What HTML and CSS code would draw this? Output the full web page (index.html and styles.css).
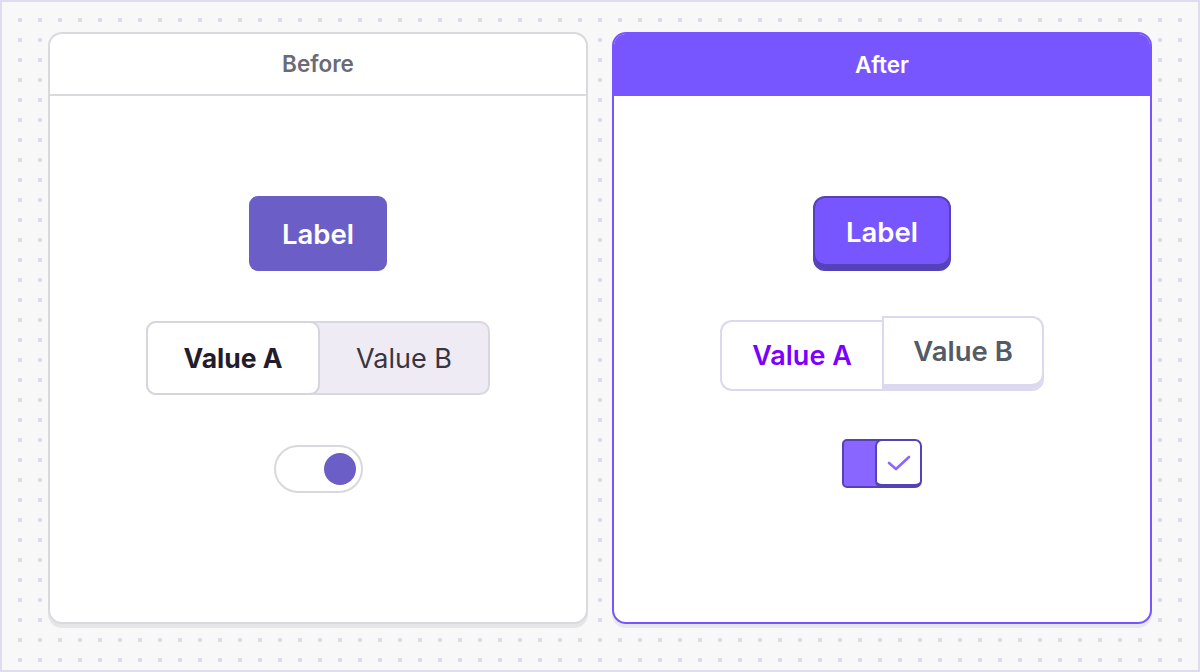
FILE: index.html
```html
<!DOCTYPE html>
<html>
<head>
<meta charset="utf-8">
<link rel="stylesheet" href="styles.css">
</head>
<body>
<div class="frame">
  <section class="card card-before">
    <header class="card-head">Before</header>
    <div class="card-body">
      <div class="btn-before">Label</div>
      <div class="seg-before">
        <div class="seg-before-a">Value A</div>
        <div class="seg-before-b">Value B</div>
      </div>
      <div class="toggle-before"><span class="knob-before"></span></div>
    </div>
  </section>
  <section class="card card-after">
    <header class="card-head head-after">After</header>
    <div class="card-body">
      <div class="btn-after">Label</div>
      <div class="seg-after">
        <div class="seg-after-a">Value A</div>
        <div class="seg-after-b">Value B</div>
      </div>
      <div class="toggle-after">
        <span class="track-after"></span>
        <span class="knob-after">
          <svg width="26" height="18" viewBox="0 0 26 18"><path d="M3 9 L10 15 L23 3" fill="none" stroke="#8a66ff" stroke-width="2.6" stroke-linecap="round" stroke-linejoin="round"/></svg>
        </span>
      </div>
    </div>
  </section>
</div>
</body>
</html>
```
FILE: styles.css
```css
* { box-sizing: border-box; }
html, body { margin: 0; padding: 0; }
body { font-family: Inter, "Noto Sans", sans-serif; }
.frame {
  width: 1200px;
  height: 672px;
  border: 2px solid #dedcf0;
  background-color: #f8f8f8;
  background-image: radial-gradient(circle, #dcdae6 2px, transparent 2.5px);
  background-size: 20px 20px;
  background-position: 8px 8px;
  padding: 30px 46px 0 46px;
  display: flex;
  gap: 24px;
}
.card {
  width: 540px;
  height: 592px;
  background: #fff;
  border-radius: 14px;
  display: flex;
  flex-direction: column;
  overflow: hidden;
}
.card-before {
  border: 2px solid #d9d9de;
  box-shadow: 0 4px 0 #e6e6e9;
}
.card-after {
  border: 2px solid #7755ff;
  box-shadow: 0 4px 0 #e8e8ea;
}
.card-head {
  height: 62px;
  display: flex;
  align-items: center;
  justify-content: center;
  font-size: 22.5px;
  font-weight: 600;
  color: #6b6a77;
  border-bottom: 2px solid #d9d9de;
  flex: none;
  padding-bottom: 2px;
}
.head-after {
  background: #7755ff;
  color: #fff;
  border-bottom: none;
  height: 62px;
}
.card-body {
  flex: 1;
  display: flex;
  flex-direction: column;
  align-items: center;
  padding-top: 100px;
}

.btn-before {
  width: 138px;
  height: 75px;
  border-radius: 9px;
  background: #6b5fc7;
  color: #fff;
  font-size: 27.5px;
  font-weight: 600;
  display: flex;
  align-items: center;
  justify-content: center;
}
.seg-before {
  margin-top: 50px;
  width: 344px;
  height: 74px;
  border: 2px solid #d9d7e0;
  border-radius: 10px;
  background: #efebf5;
  display: flex;
}
.seg-before-a {
  width: 174px;
  margin: -2px 0 -2px -2px;
  background: #fff;
  border: 2px solid #d6d4dc;
  border-radius: 10px;
  display: flex;
  align-items: center;
  justify-content: center;
  font-size: 26.5px;
  font-weight: 700;
  color: #231c2c;
}
.seg-before-b {
  flex: 1;
  display: flex;
  align-items: center;
  justify-content: center;
  font-size: 27px;
  font-weight: 400;
  color: #3a3340;
}
.toggle-before {
  margin-top: 50px;
  width: 89px;
  height: 48px;
  border: 2px solid #d8d8de;
  border-radius: 24px;
  display: flex;
  align-items: center;
  justify-content: flex-end;
  padding-right: 5px;
}
.knob-before {
  width: 32px;
  height: 32px;
  border-radius: 50%;
  background: #6b5fc7;
}

.btn-after {
  width: 138px;
  height: 75px;
  border-radius: 12px;
  background: #7755ff;
  border: 2px solid #5541b8;
  box-shadow: inset 0 -5px 0 #5541b8;
  padding-bottom: 3px;
  color: #fff;
  font-size: 27.5px;
  font-weight: 600;
  display: flex;
  align-items: center;
  justify-content: center;
}
.seg-after {
  margin-top: 49px;
  width: 324px;
  height: 71px;
  display: flex;
  align-items: flex-end;
}
.seg-after-a {
  width: 162px;
  height: 71px;
  border: 2px solid #dcd8ef;
  border-right: none;
  border-radius: 12px 0 0 12px;
  background: #fff;
  display: flex;
  align-items: center;
  justify-content: center;
  font-size: 27px;
  font-weight: 600;
  color: #7a00ff;
}
.seg-after-b {
  flex: 1;
  height: 75px;
  border: 2px solid #dcd8ef;
  border-radius: 0 12px 12px 0;
  background: #fff;
  box-shadow: inset 0 -5px 0 #dcd8ef;
  padding-bottom: 6px;
  display: flex;
  align-items: center;
  justify-content: center;
  font-size: 27.5px;
  font-weight: 600;
  color: #545a66;
}
.toggle-after {
  margin-top: 48px;
  width: 80px;
  height: 49px;
  display: flex;
}
.track-after {
  width: 44px;
  height: 49px;
  background: #8866ff;
  border: 2px solid #5541b8;
  border-radius: 5px 0 0 5px;
}
.knob-after {
  width: 47px;
  height: 49px;
  margin-left: -11px;
  background: #fff;
  border: 2px solid #5541b8;
  border-bottom-width: 4px;
  border-radius: 7px;
  display: flex;
  align-items: center;
  justify-content: center;
}
```
